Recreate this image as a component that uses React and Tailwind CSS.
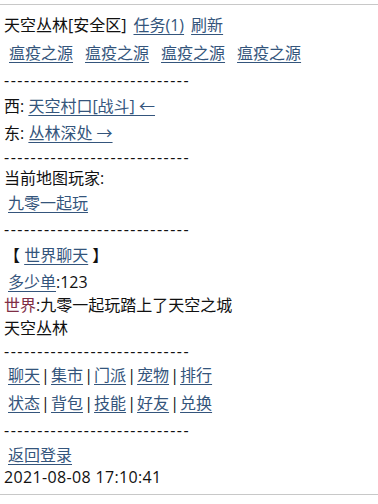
const font = { fontFamily: '"Open Sans", "Noto Sans CJK SC", sans-serif' };

const L = ({ children, className = '' }) => (
  <a href="#" className={`text-[#34557c] underline underline-offset-[3px] decoration-1 ${className}`}>
    {children}
  </a>
);

const Dashes = ({ className = '' }) => (
  <div className={`h-[21px] leading-[25px] tracking-[1.5px] text-[#111] ${className}`}>
    ----------------------------
  </div>
);

const Sep = () => <span className="w-[11px] text-center">|</span>;

export default function App() {
  return (
    <div style={font} className="w-[378px] h-[504px] bg-white text-[16px] text-[#111]">
      <div className="h-[4px]" />
      <div className="border-t border-b border-[#c8c8c8] pl-[4px] pt-[10px] pb-[6px] whitespace-pre">
        {/* location */}
        <div className="h-[21px] leading-[21px] flex">
          <span>天空丛林[安全区]</span>
          <L className="ml-[7px]">任务(1)</L>
          <L className="ml-[7px]">刷新</L>
        </div>
        <div className="mt-[7px] h-[21px] leading-[21px] flex pl-[5px] gap-[12px]">
          <L>瘟疫之源</L>
          <L>瘟疫之源</L>
          <L>瘟疫之源</L>
          <L>瘟疫之源</L>
        </div>
        <Dashes className="mt-[4px]" />

        {/* exits */}
        <div className="mt-[7px] h-[21px] leading-[21px]">
          西: <L>天空村口[战斗] ←</L>
        </div>
        <div className="mt-[6px] h-[21px] leading-[21px]">
          东: <L>丛林深处 →</L>
        </div>
        <Dashes className="mt-[1px]" />

        {/* players */}
        <div className="mt-[2px] h-[21px] leading-[21px]">当前地图玩家:</div>
        <div className="mt-[4px] h-[21px] leading-[21px] pl-[4px]">
          <L>九零一起玩</L>
        </div>
        <Dashes className="mt-[3px]" />

        {/* chat */}
        <div className="mt-[7px] h-[21px] leading-[21px] flex">
          <span>【 </span>
          <L>世界聊天</L>
          <span> 】</span>
        </div>
        <div className="mt-[6px] h-[21px] leading-[21px] pl-[4px]">
          <L>多少单</L>:123
        </div>
        <div className="mt-[2px] h-[21px] leading-[21px]">
          <span className="text-[#7f2e45]">世界</span>:九零一起玩踏上了天空之城
        </div>
        <div className="mt-[2px] h-[21px] leading-[21px]">天空丛林</div>
        <Dashes />

        {/* menu */}
        <div className="mt-[5px] h-[21px] leading-[21px] pl-[4px] flex">
          <L>聊天</L><Sep /><L>集市</L><Sep /><L>门派</L><Sep /><L>宠物</L><Sep /><L>排行</L>
        </div>
        <div className="mt-[7px] h-[21px] leading-[21px] pl-[4px] flex">
          <L>状态</L><Sep /><L>背包</L><Sep /><L>技能</L><Sep /><L>好友</L><Sep /><L>兑换</L>
        </div>
        <Dashes className="mt-[4px]" />

        <div className="mt-[6px] h-[21px] leading-[21px] pl-[4px]">
          <L>返回登录</L>
        </div>
        <div className="mt-[1px] h-[21px] leading-[21px] tracking-[0.35px]">2021-08-08 17:10:41</div>
      </div>
    </div>
  );
}
